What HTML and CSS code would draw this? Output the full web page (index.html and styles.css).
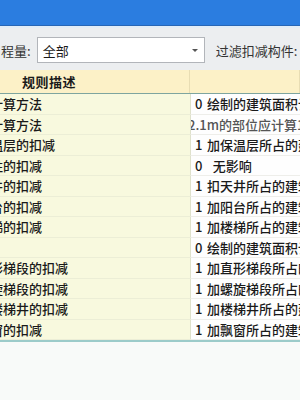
FILE: index.html
```html
<!DOCTYPE html>
<html lang="zh-CN">
<head>
    <meta charset="UTF-8">
    <title>规则设置</title>
    <link rel="stylesheet" href="styles.css">
</head>
<body>
    <div class="titlebar"></div>

    <div class="toolbar">
        <span class="label">程量:</span>
        <div class="select">
            <span>全部</span>
            <span class="arrow"></span>
        </div>
        <span class="label filter">过滤扣减构件:</span>
    </div>

    <div class="grid">
        <div class="head">
            <div class="head-cell">规则描述</div>
            <div class="head-cell"></div>
        </div>

        <div class="row"><div class="desc"><span>计算方法</span></div><div class="val"><b>0</b>绘制的建筑面积计算</div></div>
        <div class="row"><div class="desc"><span>计算方法</span></div><div class="val long">2.1m的部位应计算1/2</div></div>
        <div class="row"><div class="desc"><span>温层的扣减</span></div><div class="val"><b>1</b>加保温层所占的建筑</div></div>
        <div class="row"><div class="desc"><span>柱的扣减</span></div><div class="val"><b>0</b>&nbsp;&nbsp;无影响</div></div>
        <div class="row"><div class="desc"><span>井的扣减</span></div><div class="val"><b>1</b>扣天井所占的建筑面</div></div>
        <div class="row"><div class="desc"><span>台的扣减</span></div><div class="val"><b>1</b>加阳台所占的建筑面</div></div>
        <div class="row"><div class="desc"><span>梯的扣减</span></div><div class="val"><b>1</b>加楼梯所占的建筑面</div></div>
        <div class="row"><div class="desc"><span></span></div><div class="val"><b>0</b>绘制的建筑面积计算</div></div>
        <div class="row"><div class="desc"><span>形梯段的扣减</span></div><div class="val"><b>1</b>加直形梯段所占的建</div></div>
        <div class="row"><div class="desc"><span>旋梯段的扣减</span></div><div class="val"><b>1</b>加螺旋梯段所占的建</div></div>
        <div class="row"><div class="desc"><span>楼梯井的扣减</span></div><div class="val"><b>1</b>加楼梯井所占的建筑</div></div>
        <div class="row"><div class="desc"><span>窗的扣减</span></div><div class="val"><b>1</b>加飘窗所占的建筑面</div></div>
    </div>
    <div class="grid-end"></div>
</body>
</html>
```

FILE: styles.css
```css
body {
    margin: 0;
    width: 300px;
    height: 400px;
    overflow: hidden;
    background: #f8faf9;
    font-family: "Noto Sans CJK SC", "DejaVu Sans", sans-serif;
    font-size: 13px;
    color: #1a1a1a;
}
.titlebar {
    height: 25px;
    background: #2b7de0;
    border-bottom: 1px solid #2766b6;
}
.toolbar {
    height: 42px;
    border-top: 2px solid #e3edf7;
    background: #eceef0;
    display: flex;
    align-items: center;
    white-space: nowrap;
}
.label {
    padding-left: 1px;
    color: #333;
    margin-top: 2px;
}
.select {
    margin-left: 6px;
    width: 161px;
    height: 24px;
    background: #fff;
    border: 1px solid #b2b5ba;
    display: flex;
    align-items: center;
    justify-content: space-between;
    padding-left: 5px;
    margin-top: 2px;
}
.arrow {
    width: 0;
    height: 0;
    border-left: 3px solid transparent;
    border-right: 3px solid transparent;
    border-top: 3px solid #555;
    margin-right: 6px;
}
.filter {
    margin-left: 10px;
}
.grid {
    width: 300px;
    overflow: hidden;
}
.head {
    display: grid;
    grid-template-columns: 190px 1fr;
    height: 23px;
    background: #fcf1c7;
    border-bottom: 1px solid #7ea59f;
}
.head-cell {
    border-right: 1px solid #e8ddb3;
    padding-left: 22px;
    font-weight: bold;
    line-height: 23px;
    letter-spacing: 0.5px;
}
.row {
    display: grid;
    grid-template-columns: 190px 1fr;
    height: 20.5px;
    line-height: 20px;
    white-space: nowrap;
    font-weight: 500;
}
.desc {
    background: #f8f9de;
    border-bottom: 1px solid #eceed6;
    overflow: hidden;
}
.desc span {
    display: block;
    margin-left: -10px;
}
.val {
    background: #fefefe;
    border-left: 1px solid #dfe1cb;
    border-bottom: 1px solid #eeeeea;
    overflow: hidden;
    padding-left: 4px;
}
.val b {
    font-weight: 500;
    display: inline-block;
    width: 12px;
}
.val.long {
    padding-left: 0;
    text-indent: -3px;
    color: #555;
}
.grid-end {
    height: 2px;
    background: #9ccbca;
}
```
